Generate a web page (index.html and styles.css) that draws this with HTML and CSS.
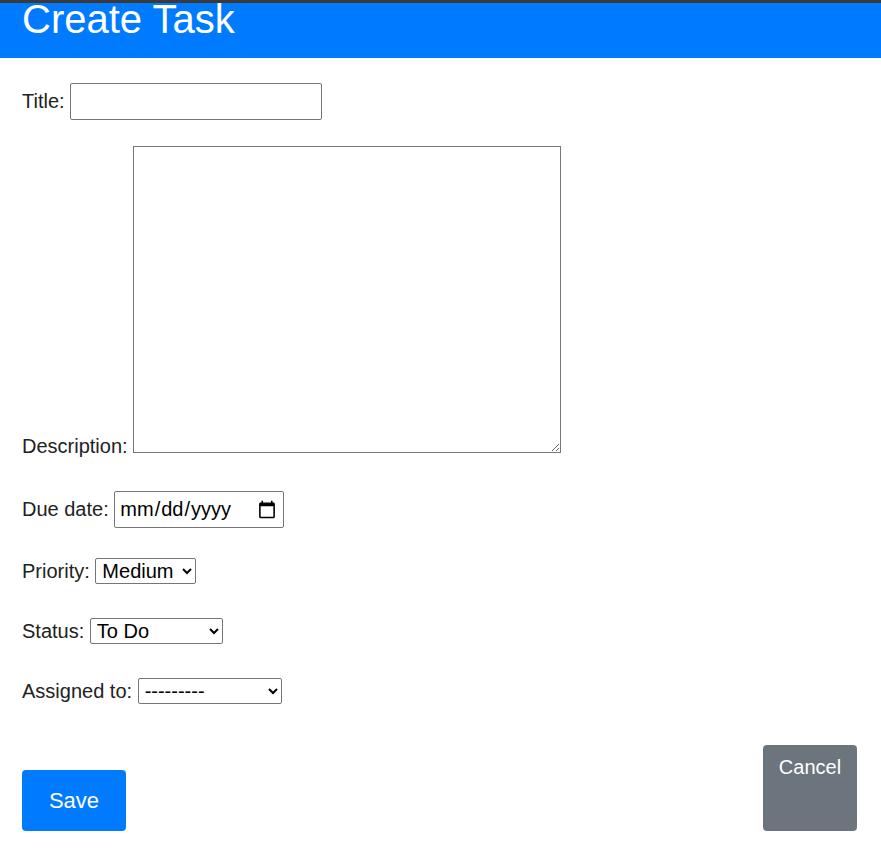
FILE: index.html
```html
<!DOCTYPE html>
<html>
<head>
<meta charset="utf-8">
<title>Create Task</title>
<link rel="stylesheet" href="styles.css">
</head>
<body>
<div class="topline"></div>
<header class="header">
  <h1 class="header-title">Create Task</h1>
</header>
<form class="task-form">
  <div class="field field-title">
    <label for="title">Title:</label>
    <input id="title" class="text-input" type="text">
  </div>
  <div class="field field-desc">
    <label for="desc">Description:</label>
    <textarea id="desc" class="textarea"></textarea>
  </div>
  <div class="field field-date">
    <label for="due">Due date:</label>
    <input id="due" class="date-input" type="date">
  </div>
  <div class="field field-select">
    <label for="priority">Priority:</label>
    <select id="priority" class="select select-priority">
      <option>Low</option>
      <option selected>Medium</option>
      <option>High</option>
    </select>
  </div>
  <div class="field field-select">
    <label for="status">Status:</label>
    <select id="status" class="select select-status">
      <option selected>To Do</option>
      <option>In Progress</option>
      <option>Done</option>
    </select>
  </div>
  <div class="field field-select field-last">
    <label for="assigned">Assigned to:</label>
    <select id="assigned" class="select select-assigned">
      <option selected>---------</option>
    </select>
  </div>
  <div class="actions">
    <button type="submit" class="btn btn-save">Save</button>
    <a href="#" class="btn btn-cancel">Cancel</a>
  </div>
</form>
</body>
</html>
```

FILE: styles.css
```css
html, body {
  margin: 0;
  padding: 0;
  background: #fff;
}
body {
  font-family: "Liberation Sans", Arial, sans-serif;
  color: #222;
  font-size: 20px;
}
.topline {
  height: 3px;
  background: #3a3a3a;
}
.header {
  height: 55px;
  background: #007bff;
  padding: 0 22px;
}
.header-title {
  margin: 0;
  font-size: 40px;
  font-weight: normal;
  line-height: 32px;
  color: #fff;
}
.task-form {
  padding: 25px 22px 0;
}
.field {
  margin: 0;
}
.field label {
  color: #222;
}
.field-title {
  margin-bottom: 26px;
}
.field-desc {
  margin-bottom: 33px;
}
.field-date {
  margin-bottom: 30px;
}
.field-select {
  margin-bottom: 34px;
}
.field-last {
  margin-bottom: 0;
}
.text-input {
  width: 252px;
  height: 37px;
  box-sizing: border-box;
  font: 20px "Liberation Sans", Arial, sans-serif;
  border: 1px solid #767676;
  border-radius: 2px;
  padding: 1px 4px;
  vertical-align: baseline;
}
.textarea {
  width: 428px;
  height: 307px;
  box-sizing: border-box;
  border: 1px solid #767676;
  font: 16px "Liberation Mono", monospace;
  vertical-align: baseline;
  resize: both;
}
.date-input {
  width: 170px;
  height: 37px;
  box-sizing: border-box;
  font: 20px "Liberation Sans", Arial, sans-serif;
  color: #000;
  border: 1px solid #767676;
  border-radius: 2px;
  padding: 1px 4px;
}
.select {
  font: 20px "Liberation Sans", Arial, sans-serif;
  color: #000;
  height: 26px;
  box-sizing: border-box;
  border: 1px solid #767676;
  border-radius: 2px;
  background: #fff;
  padding: 0 2px;
}
.select-priority { width: 101px; }
.select-status { width: 133px; }
.select-assigned { width: 144px; }
.actions {
  display: flex;
  justify-content: space-between;
  align-items: flex-end;
  margin-top: 41px;
  padding-right: 2px;
}
.btn {
  font: 22px "Liberation Sans", Arial, sans-serif;
  color: #fff;
  border: none;
  border-radius: 4px;
  text-decoration: none;
  box-sizing: border-box;
}
.btn-save {
  background: #007bff;
  width: 104px;
  height: 61px;
  padding: 0;
  text-align: center;
}
.btn-cancel {
  background: #6c757d;
  width: 94px;
  height: 86px;
  padding: 11px 0 0;
  font-size: 20px;
  text-align: center;
  display: block;
}
```
